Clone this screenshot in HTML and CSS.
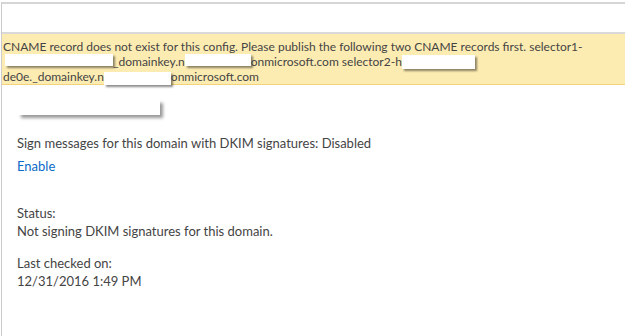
FILE: index.html
```html
<!DOCTYPE html>
<html lang="en">
<head>
<meta charset="utf-8">
<title>DKIM</title>
<link rel="stylesheet" href="styles.css">
</head>
<body>
<div class="frame">
  <div class="head"></div>
  <div class="msgbar">
    <div class="line">CNAME record does not exist for this config. Please publish the following two CNAME records first. selector1-</div>
    <div class="line"><span class="redact r1"></span>_domainkey.n<span class="redact r2"></span>onmicrosoft.com selector2-h<span class="redact r3"></span></div>
    <div class="line">de0e._domainkey.n<span class="redact r4"></span>onmicrosoft.com</div>
  </div>
  <div class="content">
    <div class="redact-row"></div>
    <p class="setting">Sign messages for this domain with DKIM signatures: Disabled</p>
    <a class="link" href="#">Enable</a>
    <div class="group">
      <div>Status:</div>
      <div>Not signing DKIM signatures for this domain.</div>
    </div>
    <div class="group">
      <div>Last checked on:</div>
      <div>12/31/2016 1:49 PM</div>
    </div>
  </div>
</div>
</body>
</html>
```

FILE: styles.css
```css
html, body {
  margin: 0;
  padding: 0;
  height: 100%;
  background: #ffffff;
}
body {
  font-family: Lato, "Open Sans", "Liberation Sans", sans-serif;
  font-size: 13px;
  color: #444444;
  overflow: hidden;
}
.frame {
  margin: 2px 0 0 1px;
  border-top: 2px solid #d6d6d6;
  border-left: 1px solid #cccccc;
  height: calc(100% - 4px);
}
.head {
  height: 28px;
}
.msgbar {
  background: #fdecb2;
  border-top: 2px solid #d9d9d9;
  border-bottom: 1px solid #f1d37c;
  padding: 5px 0 0 1px;
  font-size: 12px;
}
.line {
  line-height: 15px;
  height: 15px;
  white-space: nowrap;
}
.redact {
  display: inline-block;
  background: #ffffff;
  height: 12px;
  vertical-align: 0;
  box-shadow: 2px 2px 2px rgba(0, 0, 0, 0.45);
}
.r1 { width: 108px; margin-left: 2px; }
.r2 { width: 66px; }
.r3 { width: 73px; height: 14px; vertical-align: -3px; }
.r4 { width: 67px; height: 13px; vertical-align: -4px; }
.content {
  padding-left: 15px;
}
.redact-row {
  margin: 15px 0 0 1px;
  width: 142px;
  height: 15px;
  background: #ffffff;
  box-shadow: 3px 3px 3px rgba(0, 0, 0, 0.4);
}
.setting {
  margin: 19px 0 0 0;
  line-height: 18px;
}
.link {
  display: block;
  margin-top: 5px;
  line-height: 18px;
  color: #0a6ac8;
  text-decoration: none;
}
.group {
  line-height: 18px;
  margin-top: 29px;
}
.group + .group {
  margin-top: 14px;
}
```
